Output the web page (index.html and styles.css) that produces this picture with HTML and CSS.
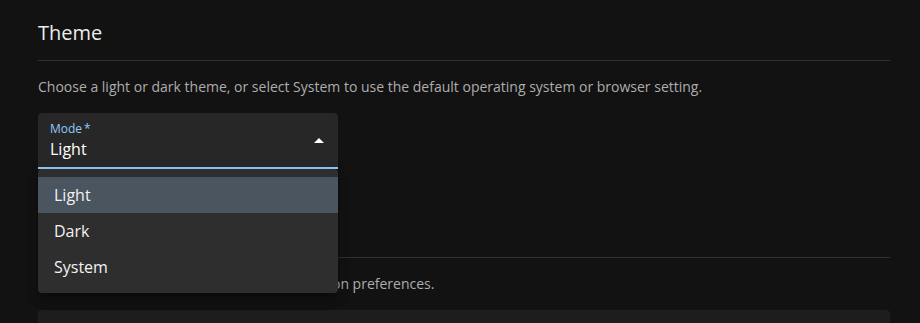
FILE: index.html
```html
<!DOCTYPE html>
<html lang="en">
<head>
<meta charset="utf-8">
<title>Settings</title>
<link rel="stylesheet" href="styles.css">
</head>
<body>
<main class="page">
  <section class="section section-theme">
    <h2 class="section-title">Theme</h2>
    <p class="section-desc">Choose a light or dark theme, or select System to use the default operating system or browser setting.</p>
    <div class="select">
      <div class="select-field">
        <label class="select-label">Mode&thinsp;*</label>
        <div class="select-value">Light</div>
        <svg class="select-icon" viewBox="0 0 24 24" width="24" height="24" aria-hidden="true"><path d="M7 14l5-5 5 5z" fill="#fff"/></svg>
      </div>
      <ul class="menu">
        <li class="menu-item selected">Light</li>
        <li class="menu-item">Dark</li>
        <li class="menu-item">System</li>
      </ul>
    </div>
  </section>
  <section class="section">
    <h2 class="section-title">Language</h2>
    <p class="section-desc">Set your display language and other localization preferences.</p>
    <div class="card"></div>
  </section>
</main>
</body>
</html>
```
FILE: styles.css
```css
html, body {
  margin: 0;
  padding: 0;
  background: #121212;
  height: 100%;
  overflow: hidden;
}
body {
  font-family: "Open Sans", "Noto Sans", sans-serif;
  color: #fff;
}
.page {
  margin: 0 30px 0 38px;
  padding-top: 19px;
}
.section-theme {
  margin-bottom: 47px;
}
.section-title {
  margin: 0;
  font-size: 20px;
  font-weight: 400;
  line-height: 28px;
  color: #ececec;
  padding-bottom: 13px;
  border-bottom: 1px solid rgba(255, 255, 255, 0.13);
}
.section-desc {
  margin: 16px 0;
  font-size: 14px;
  line-height: 20px;
  color: #adadad;
}
.select {
  position: relative;
  width: 300px;
  z-index: 2;
}
.select-field {
  position: relative;
  height: 54px;
  background: #272727;
  border-radius: 4px 4px 0 0;
  border-bottom: 2px solid #90caf9;
}
.select-label {
  position: absolute;
  left: 12px;
  top: 7px;
  font-size: 12px;
  line-height: 17px;
  color: #90caf9;
}
.select-value {
  padding: 25px 12px 0;
  font-size: 16px;
  line-height: 23px;
  color: #fff;
}
.select-icon {
  position: absolute;
  right: 7px;
  top: 16px;
}
.menu {
  position: absolute;
  left: 0;
  top: 100%;
  width: 300px;
  margin: 0;
  padding: 8px 0;
  list-style: none;
  background: #2e2e2e;
  border-radius: 4px;
  box-shadow: 0 5px 5px -3px rgba(0,0,0,0.2), 0 8px 10px 1px rgba(0,0,0,0.14), 0 3px 14px 2px rgba(0,0,0,0.12);
}
.menu-item {
  height: 36px;
  line-height: 36px;
  padding: 0 16px;
  font-size: 16px;
  color: #f2f2f2;
}
.menu-item.selected {
  background: #4a5560;
}
.card {
  height: 80px;
  background: #1d1d1d;
  border-radius: 4px;
}
```
